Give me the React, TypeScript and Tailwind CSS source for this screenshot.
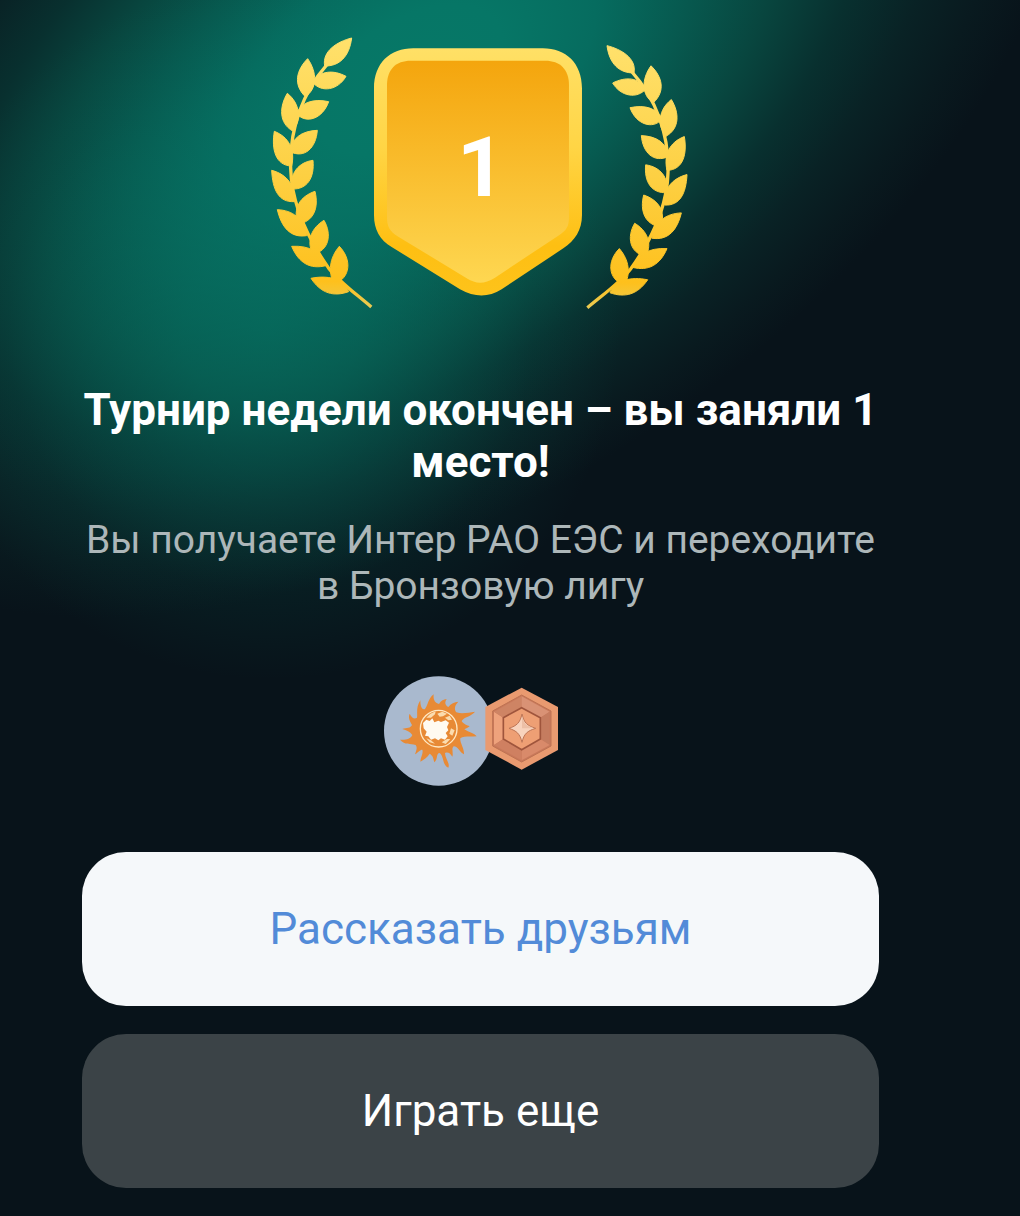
import React from 'react';

const LEAVES = [
  'M275 39C232 50 186 78 194 123C238 124 268 95 275 39Z',
  'M143 101C110 134 98 178 136 215C172 192 172 142 143 101Z',
  'M258 154C220 134 180 136 158 172C184 204 234 196 258 154Z',
  'M82 205C58 245 56 294 98 318C126 285 120 235 82 205Z',
  'M206 230C160 220 124 232 110 266C138 298 188 282 206 230Z',
  'M43 319C34 372 46 422 95 423C106 375 87 336 43 319Z',
  'M172 316C126 318 96 338 90 380C135 402 168 368 172 316Z',
  'M35 436C38 495 56 532 102 530C108 485 82 448 35 436Z',
  'M159 406C116 412 88 445 96 492C142 494 164 458 159 406Z',
  'M52 554C64 605 90 640 140 632C131 580 98 556 52 554Z',
  'M165 499C121 514 98 548 113 598C162 590 177 548 165 499Z',
  'M95 664C116 714 150 734 198 722C184 682 150 661 95 664Z',
  'M192 586C156 608 138 645 158 688C208 678 216 628 192 586Z',
  'M153 760C183 806 222 816 266 800C249 760 202 750 153 760Z',
  'M238 664C208 700 204 740 222 778C274 758 275 702 238 664Z',
];

const Laurel: React.FC<{ transform: string }> = ({ transform }) => (
  <g transform={transform} fill="url(#laurel)" stroke="url(#laurel)">
    {LEAVES.map(d => <path key={d} d={d} strokeWidth="3" />)}
    <path
      d="M200 120C130 200 88 310 92 430C95 550 150 650 205 728C235 768 275 796 334 846"
      fill="none"
      strokeWidth="10"
    />
  </g>
);

const Emblem = () => (
  <svg viewBox="1 0 420 274" className="w-[420px] h-[274px]" role="img" aria-label="1">
    <defs>
      <linearGradient id="laurel" gradientUnits="userSpaceOnUse" x1="0" y1="40" x2="0" y2="850">
        <stop offset="0" stopColor="#ffe16c" />
        <stop offset="0.5" stopColor="#fdd043" />
        <stop offset="0.9" stopColor="#fec01c" />
        <stop offset="1" stopColor="#e9cb55" />
      </linearGradient>
      <linearGradient id="shieldRim" x1="0" y1="0" x2="0" y2="1">
        <stop offset="0" stopColor="#ffe066" />
        <stop offset="0.4" stopColor="#ffd545" />
        <stop offset="0.8" stopColor="#febf12" />
        <stop offset="1" stopColor="#fdc31b" />
      </linearGradient>
      <linearGradient id="shieldFace" x1="0" y1="0" x2="0" y2="1">
        <stop offset="0" stopColor="#f4a50d" />
        <stop offset="1" stopColor="#fed751" />
      </linearGradient>
    </defs>
    <Laurel transform="matrix(0.3333 0 0 0.3333 -10 -12)" />
    <Laurel transform="matrix(-0.3333 0 0 0.3247 428.67 -4)" />
    <g transform="matrix(0.3333 0 0 0.3333 90 -2)">
      <path
        d="M42 160C42 85 90 40 160 40H548C618 40 666 85 666 160V540C666 585 645 617 610 640L425 763C385 788 345 788 300 763L95 636C60 615 42 585 42 540Z"
        fill="url(#shieldRim)"
      />
      <path
        d="M81 150C81 103 108 77 152 77H556C600 77 627 103 627 150V545C627 575 620 585 595 602L405 728C372 748 350 748 320 730L115 605C88 588 81 575 81 545Z"
        fill="url(#shieldFace)"
      />
    </g>
    <text x="211" y="159" textAnchor="middle" fill="#fff" fontSize="84" fontWeight="700">1</text>
  </svg>
);

const CompanyLogo = () => (
  <svg viewBox="0 0 330 330" className="w-[110px] h-[110px]" aria-hidden="true">
    <circle cx="164" cy="165" r="164" fill="#a9b9ce" />
    <g transform="translate(33 27)">
      <path
        d="M116 28C114 45 120 54 132 57C138 47 146 43 155 42C148 52 150 60 160 66C168 55 178 52 190 50C180 60 176 72 184 82C202 88 222 82 240 80C230 94 206 96 200 108C206 118 216 120 224 124C216 130 212 130 208 133C222 142 238 145 245 154C225 156 206 152 196 160C194 172 208 190 207 208C193 202 190 184 176 184C168 190 176 205 172 215C165 205 160 200 150 204C150 220 166 235 160 248C141 240 148 215 134 204C122 205 130 222 118 232C115 220 114 212 104 206C98 217 85 224 76 230C76 218 86 205 82 194C75 194 70 202 60 208C64 195 68 188 62 180C46 174 30 182 15 164C30 166 47 162 52 150C45 140 35 136 22 132C35 128 47 130 51 120C46 110 38 100 44 86C50 98 58 104 66 98C68 86 62 68 76 46C76 62 80 76 90 72C100 60 98 42 116 28Z"
        fill="#e88a35"
      />
      <circle cx="131" cy="131" r="55" fill="#e88a35" stroke="#ffe9c4" strokeWidth="4" />
      <path
        d="M84 114L94 104L104 108L112 100L118 112L130 107L138 111L152 106L162 113L156 126L160 136L152 144L158 154L150 164L138 160L130 166L120 160L108 164L100 154L90 152L95 140L86 130Z"
        fill="#fffaf0"
      />
      <path
        d="M94 98L106 86L122 79L120 88L108 98ZM127 86L142 80L156 86L144 94L134 95ZM150 98L164 92L171 104L160 106ZM94 160L108 166L120 176L104 172ZM140 172L156 162L166 162L152 177ZM168 130L179 136L172 152L163 146Z"
        fill="#fbdcae"
      />
    </g>
  </svg>
);

const LeagueBadge = () => (
  <svg viewBox="15 22 222 264" className="relative -ml-[9px] w-[74px] h-[88px]" aria-hidden="true">
    <path d="M125 24L234 82V211L125 270L16 211V82Z" fill="#e99a70" />
    <path d="M125 46L213 94V199L125 247L38 199V94Z" fill="#c9785a" stroke="#bd7353" strokeWidth="3" />
    <path d="M42 96L70 114V178L42 196Z" fill="#eea27c" />
    <path d="M42 96L125 50V84L70 114Z" fill="#ce8464" />
    <path d="M125 50L209 96L181 114L125 84Z" fill="#d99275" />
    <path d="M209 96V196L181 178V114Z" fill="#c57c5f" />
    <path d="M209 196L125 242V210L181 178Z" fill="#d98a6a" />
    <path d="M125 242L42 196L70 178L125 210Z" fill="#cf8061" />
    <path d="M125 84L181 114V178L125 210L70 178V114Z" fill="#ee9f74" stroke="#9f553c" strokeWidth="5" />
    <path d="M126 103C132 130 142 138 167 146C142 154 132 162 126 188C120 162 110 154 87 146C110 138 120 130 126 103Z" fill="#f8d3bd" stroke="#bd7556" strokeWidth="3" />
    <path d="M126 108C131 132 140 139 162 146H126Z" fill="#ecbfa6" />
  </svg>
);

const App = () => (
  <div className="relative min-h-screen overflow-hidden bg-[#08131a] font-[Roboto,sans-serif]">
    {/* teal glow behind the emblem, with a softer one trailing below it */}
    <div className="absolute -left-[330px] -top-[345px] h-[850px] w-[1480px] -rotate-33 bg-[radial-gradient(closest-side,#067867_0%,#067666_14%,#066c5f_28%,#07594f_42%,#08463f_55%,#08302f_68%,#092225_80%,#091a1f_90%,#08131a_100%)]" />
    <div className="absolute -left-[80px] -top-[20px] h-[700px] w-[700px] bg-[radial-gradient(closest-side,#06766699_0%,#06766680_25%,#0676664d_50%,#0676661a_75%,#06766600_100%)]" />

    <main className="relative flex flex-col pt-[37px] pr-[141px] pb-7 pl-[82px] text-center">
      <div className="flex justify-center">
        <Emblem />
      </div>

      <h1 className="mt-[73px] text-[44px] leading-[52px] font-bold text-white">
        Турнир недели окончен – вы заняли 1 место!
      </h1>
      <p className="mt-[29px] text-[39px] leading-[46px] text-[#adb7b9]">
        Вы получаете Интер РАО ЕЭС и переходите в Бронзовую лигу
      </p>

      <div className="mt-[67px] flex items-center justify-center pr-[18px]">
        <CompanyLogo />
        <LeagueBadge />
      </div>

      <div className="mt-[66px] flex flex-col gap-7 text-[44px] leading-[52px]">
        <button type="button" className="h-[154px] rounded-[44px] bg-[#f5f8fa] text-[#528bd8]">
          Рассказать друзьям
        </button>
        <button type="button" className="h-[154px] rounded-[44px] bg-[#3b4347] text-white">
          Играть еще
        </button>
      </div>
    </main>
  </div>
);

export default App;
